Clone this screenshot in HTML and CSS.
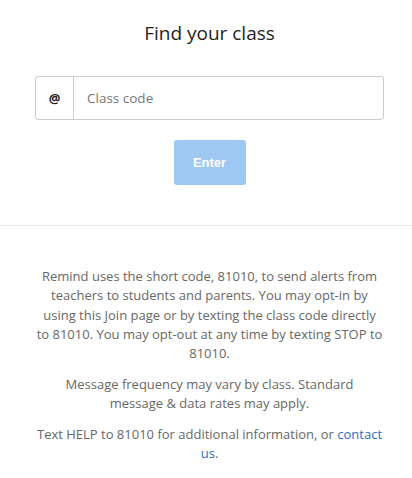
FILE: index.html
```html
<!DOCTYPE html>
<html>
<head>
<meta charset="utf-8">
<link rel="stylesheet" href="styles.css">
</head>
<body>
<div class="page">
  <section class="top">
    <h1 class="title">Find your class</h1>
    <div class="field">
      <span class="prefix">@</span>
      <span class="placeholder">Class code</span>
    </div>
    <button class="enter">Enter</button>
  </section>
  <hr class="divider">
  <section class="info">
    <p>Remind uses the short code, 81010, to send alerts from teachers to students and parents. You may opt-in by<br>using this Join page or by texting the class code directly<br>to 81010. You may opt-out at any time by texting STOP to 81010.</p>
    <p class="narrow">Message frequency may vary by class. Standard message &amp; data rates may apply.</p>
    <p>Text HELP to 81010 for additional information, or <a class="link" href="#">contact us</a>.</p>
  </section>
</div>
</body>
</html>
```
FILE: styles.css
```css
html, body {
  margin: 0;
  padding: 0;
  background: #fff;
}
.page {
  font-family: "Open Sans", Lato, sans-serif;
  color: #222;
}
.top {
  display: flex;
  flex-direction: column;
  align-items: center;
  padding: 20px 28px 0 35px;
}
.title {
  margin: 0;
  font-size: 19px;
  font-weight: 400;
  line-height: 26px;
  color: #1f1f24;
}
.field {
  margin-top: 30px;
  width: 100%;
  box-sizing: border-box;
  height: 44px;
  border: 1px solid #cccccc;
  border-radius: 3px;
  display: flex;
  align-items: center;
}
.prefix {
  width: 37px;
  height: 100%;
  border-right: 1px solid #cccccc;
  display: flex;
  align-items: center;
  justify-content: center;
  font-weight: 700;
  font-size: 13px;
  color: #222;
}
.placeholder {
  padding-left: 13px;
  font-size: 13.5px;
  color: #777;
}
.enter {
  margin-top: 20px;
  width: 72px;
  height: 45px;
  border: none;
  border-radius: 3px;
  background: #9ec8f1;
  color: #fff;
  font-family: "Liberation Sans", Arial, sans-serif;
  font-weight: 700;
  font-size: 13px;
}
.divider {
  margin: 40px 0 0;
  border: none;
  border-top: 1px solid #ebebeb;
  height: 0;
}
.info {
  padding: 41px 26px 0 33px;
  text-align: center;
  font-size: 13px;
  line-height: 19.25px;
  color: #686868;
}
.info p {
  margin: 0 0 11.5px;
}
.info .narrow {
  padding: 0 12px;
}
.link {
  color: #2b6fc6;
  text-decoration: none;
}
```
